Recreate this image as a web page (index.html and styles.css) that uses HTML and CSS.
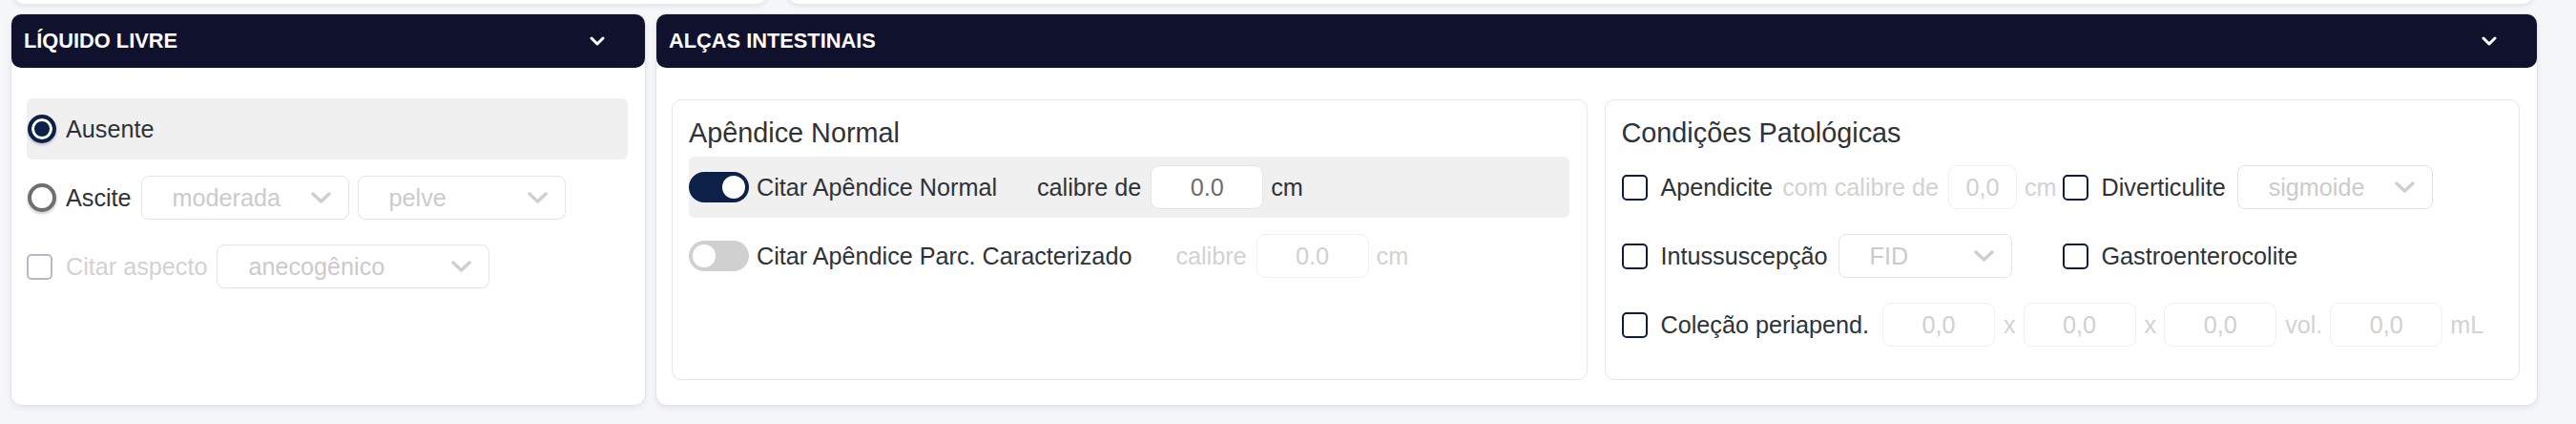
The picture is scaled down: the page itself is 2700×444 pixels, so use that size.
FILE: index.html
```html
<!DOCTYPE html>
<html lang="pt-BR">
<head>
<meta charset="utf-8">
<title>Exame</title>
<link rel="stylesheet" href="styles.css">
</head>
<body>
<div class="page">
  <div class="top-strip">
    <div class="stub"></div>
    <div class="stub"></div>
  </div>

  <div class="grid">
    <section class="card">
      <header class="card-head">
        <span class="card-title">LÍQUIDO LIVRE</span>
        <svg class="head-chev" width="16" height="10" viewBox="0 0 16 10"><polyline points="2,2 8,8 14,2" fill="none" stroke="#fff" stroke-width="3" stroke-linecap="round" stroke-linejoin="round"/></svg>
      </header>
      <div class="card-body stack">
        <div class="row shaded">
          <span class="radio checked"></span>
          <span class="lbl">Ausente</span>
        </div>
        <div class="row">
          <span class="radio"></span>
          <span class="lbl">Ascite</span>
          <div class="select sel-moderada"><span>moderada</span><svg class="chev" width="21" height="12" viewBox="0 0 21 12"><polyline points="2,2 10.5,10 19,2" fill="none" stroke="#cfcfcf" stroke-width="3.5" stroke-linecap="round" stroke-linejoin="round"/></svg></div>
          <div class="select sel-pelve"><span>pelve</span><svg class="chev" width="21" height="12" viewBox="0 0 21 12"><polyline points="2,2 10.5,10 19,2" fill="none" stroke="#cfcfcf" stroke-width="3.5" stroke-linecap="round" stroke-linejoin="round"/></svg></div>
        </div>
        <div class="row">
          <span class="check disabled"></span>
          <span class="lbl muted">Citar aspecto</span>
          <div class="select sel-aspecto"><span>anecogênico</span><svg class="chev" width="21" height="12" viewBox="0 0 21 12"><polyline points="2,2 10.5,10 19,2" fill="none" stroke="#cfcfcf" stroke-width="3.5" stroke-linecap="round" stroke-linejoin="round"/></svg></div>
        </div>
      </div>
    </section>

    <section class="card">
      <header class="card-head">
        <span class="card-title">ALÇAS INTESTINAIS</span>
        <svg class="head-chev" width="16" height="10" viewBox="0 0 16 10"><polyline points="2,2 8,8 14,2" fill="none" stroke="#fff" stroke-width="3" stroke-linecap="round" stroke-linejoin="round"/></svg>
      </header>
      <div class="card-body boxes">
        <div class="box">
          <h3 class="box-title">Apêndice Normal</h3>
          <div class="stack">
            <div class="row shaded">
              <span class="toggle on"><span class="knob"></span></span>
              <span class="lbl tlbl">Citar Apêndice Normal</span>
              <span class="lbl gap-l">calibre de</span>
              <span class="field">0.0</span>
              <span class="lbl unit">cm</span>
            </div>
            <div class="row">
              <span class="toggle"><span class="knob"></span></span>
              <span class="lbl tlbl">Citar Apêndice Parc. Caracterizado</span>
              <span class="lbl muted gap-l2">calibre</span>
              <span class="field disabled">0.0</span>
              <span class="lbl muted unit">cm</span>
            </div>
          </div>
        </div>

        <div class="box">
          <h3 class="box-title">Condições Patológicas</h3>
          <div class="stack">
            <div class="row pair">
              <div class="cell">
                <span class="check"></span>
                <span class="lbl">Apendicite</span>
                <span class="lbl muted tight">com calibre de</span>
                <span class="field disabled small">0,0</span>
                <span class="lbl muted unit">cm</span>
              </div>
              <div class="cell">
                <span class="check"></span>
                <span class="lbl">Diverticulite</span>
                <div class="select sel-sigmoide"><span>sigmoide</span><svg class="chev" width="21" height="12" viewBox="0 0 21 12"><polyline points="2,2 10.5,10 19,2" fill="none" stroke="#cfcfcf" stroke-width="3.5" stroke-linecap="round" stroke-linejoin="round"/></svg></div>
              </div>
            </div>
            <div class="row pair">
              <div class="cell">
                <span class="check"></span>
                <span class="lbl">Intussuscepção</span>
                <div class="select sel-fid"><span>FID</span><svg class="chev" width="21" height="12" viewBox="0 0 21 12"><polyline points="2,2 10.5,10 19,2" fill="none" stroke="#cfcfcf" stroke-width="3.5" stroke-linecap="round" stroke-linejoin="round"/></svg></div>
              </div>
              <div class="cell">
                <span class="check"></span>
                <span class="lbl">Gastroenterocolite</span>
              </div>
            </div>
            <div class="row">
              <span class="check"></span>
              <span class="lbl col-lbl">Coleção periapend.</span>
              <span class="field disabled">0,0</span>
              <span class="lbl muted sep">x</span>
              <span class="field disabled">0,0</span>
              <span class="lbl muted sep">x</span>
              <span class="field disabled">0,0</span>
              <span class="lbl muted sep">vol.</span>
              <span class="field disabled">0,0</span>
              <span class="lbl muted unit">mL</span>
            </div>
          </div>
        </div>
      </div>
    </section>
  </div>
</div>
</body>
</html>
```

FILE: styles.css
```css
* { box-sizing: border-box; }

html, body {
  margin: 0;
  padding: 0;
  background: #f6f7f9;
  font-family: "Liberation Sans", Arial, Helvetica, sans-serif;
  color: #2f3237;
}

.page {
  width: 2700px;
  height: 444px;
  overflow: hidden;
}

/* cards cut off at the top of the viewport */
.top-strip {
  display: grid;
  grid-template-columns: 792px 1fr;
  gap: 20px;
  height: 5px;
  margin: 0 44px 0 13px;
}
.stub {
  height: 30px;
  margin-top: -25px;
  background: #fff;
  border: 1px solid #e3e7ee;
  border-radius: 12px;
  box-shadow: 0 2px 5px rgba(20, 30, 60, 0.08);
}

.grid {
  display: grid;
  grid-template-columns: 666px 1973px;
  gap: 10px;
  margin: 9px 0 0 11px;
  align-items: stretch;
}

.card {
  background: #fff;
  border: 1px solid #dfe4ec;
  border-radius: 12px;
  box-shadow: 0 3px 6px rgba(20, 30, 60, 0.07);
  height: 411px;
  display: flex;
  flex-direction: column;
}

.card-head {
  height: 56px;
  background: #10122d;
  border-radius: 10px;
  display: flex;
  align-items: center;
  justify-content: space-between;
  padding: 0 42px 0 13px;
  flex-shrink: 0;
}
.card-title {
  color: #fff;
  font-weight: 700;
  font-size: 21.8px;
}
.head-chev { display: block; }

.card-body {
  padding: 32px 18px 26px 16px;
  flex: 1;
}

.stack {
  display: flex;
  flex-direction: column;
  gap: 8px;
}

.row {
  height: 64px;
  display: flex;
  align-items: center;
  border-radius: 6px;
}
.row.shaded { background: #f0f0f0; }

.lbl {
  font-size: 25.2px;
  color: #2f3237;
  white-space: nowrap;
}
.lbl.muted { color: #d2d2d2; }

/* radios */
.radio {
  width: 30px;
  height: 30px;
  border-radius: 50%;
  border: 4px solid #6f6f6f;
  background: #fff;
  margin: 0 10px 0 1px;
  box-shadow: 0 2px 3px rgba(0, 0, 0, 0.22);
  flex-shrink: 0;
}
.radio.checked {
  border-color: #0c2149;
  background: #0c2149;
  box-shadow: inset 0 0 0 3px #fff, 0 2px 3px rgba(0, 0, 0, 0.22);
}

/* checkboxes */
.check {
  width: 27px;
  height: 27px;
  border: 2.5px solid #0f1d3a;
  border-radius: 5px;
  background: #fff;
  margin-right: 14px;
  flex-shrink: 0;
}
.check.disabled { border-color: #b3bbca; }

/* selects */
.select {
  height: 46px;
  border: 1.5px solid #e4e4e4;
  border-radius: 8px;
  display: flex;
  align-items: center;
  justify-content: space-between;
  padding: 0 18px 0 32px;
  font-size: 25.2px;
  color: #cbcbcb;
  background: #fff;
  flex-shrink: 0;
}
.chev { display: block; }

.sel-moderada { width: 218px; margin-left: 10px; }
.sel-pelve { width: 218px; margin-left: 9px; }
.sel-aspecto { width: 286px; margin-left: 10px; }
.sel-sigmoide { width: 205px; margin-left: 12px; }
.sel-fid { width: 182px; margin-left: 11px; }

/* toggles */
.toggle {
  width: 63px;
  height: 32px;
  border-radius: 16px;
  background: #d0d0d0;
  display: flex;
  align-items: center;
  padding: 0 4px;
  margin-right: 8px;
  flex-shrink: 0;
}
.toggle.on {
  background: #0c2048;
  justify-content: flex-end;
}
.knob {
  width: 24px;
  height: 24px;
  border-radius: 50%;
  background: #fff;
}

/* text inputs */
.field {
  width: 118px;
  height: 46px;
  border: 1.5px solid #dfe5ee;
  border-radius: 9px;
  background: #fff;
  display: flex;
  align-items: center;
  justify-content: center;
  font-size: 25.2px;
  color: #6d6d6d;
  margin-left: 10px;
  flex-shrink: 0;
}
.field.disabled {
  border-color: #f0f0f0;
  color: #d0d0d0;
}
.field.small { width: 72px; }

.unit { margin-left: 8px; }
.gap-l { margin-left: 42px; }
.gap-l2 { margin-left: 46px; }
.tight { margin-left: 10px; }
.sep { margin-left: 9px; }
.sep + .field { margin-left: 8px; }
.col-lbl { margin-right: 4px; }

/* right card */
.boxes {
  display: grid;
  grid-template-columns: 1fr 1fr;
  gap: 18px;
  padding-top: 33px;
}
.box {
  border: 1px solid #e2e6ed;
  border-radius: 10px;
  padding: 17px 18px 24px 17px;
}
.box-title {
  margin: 0 0 8px 0;
  font-size: 28.8px;
  line-height: 34px;
  font-weight: 400;
  color: #2f3237;
}

.pair {
  display: grid;
  grid-template-columns: 462px 1fr;
}
.cell {
  display: flex;
  align-items: center;
  height: 64px;
}
```
